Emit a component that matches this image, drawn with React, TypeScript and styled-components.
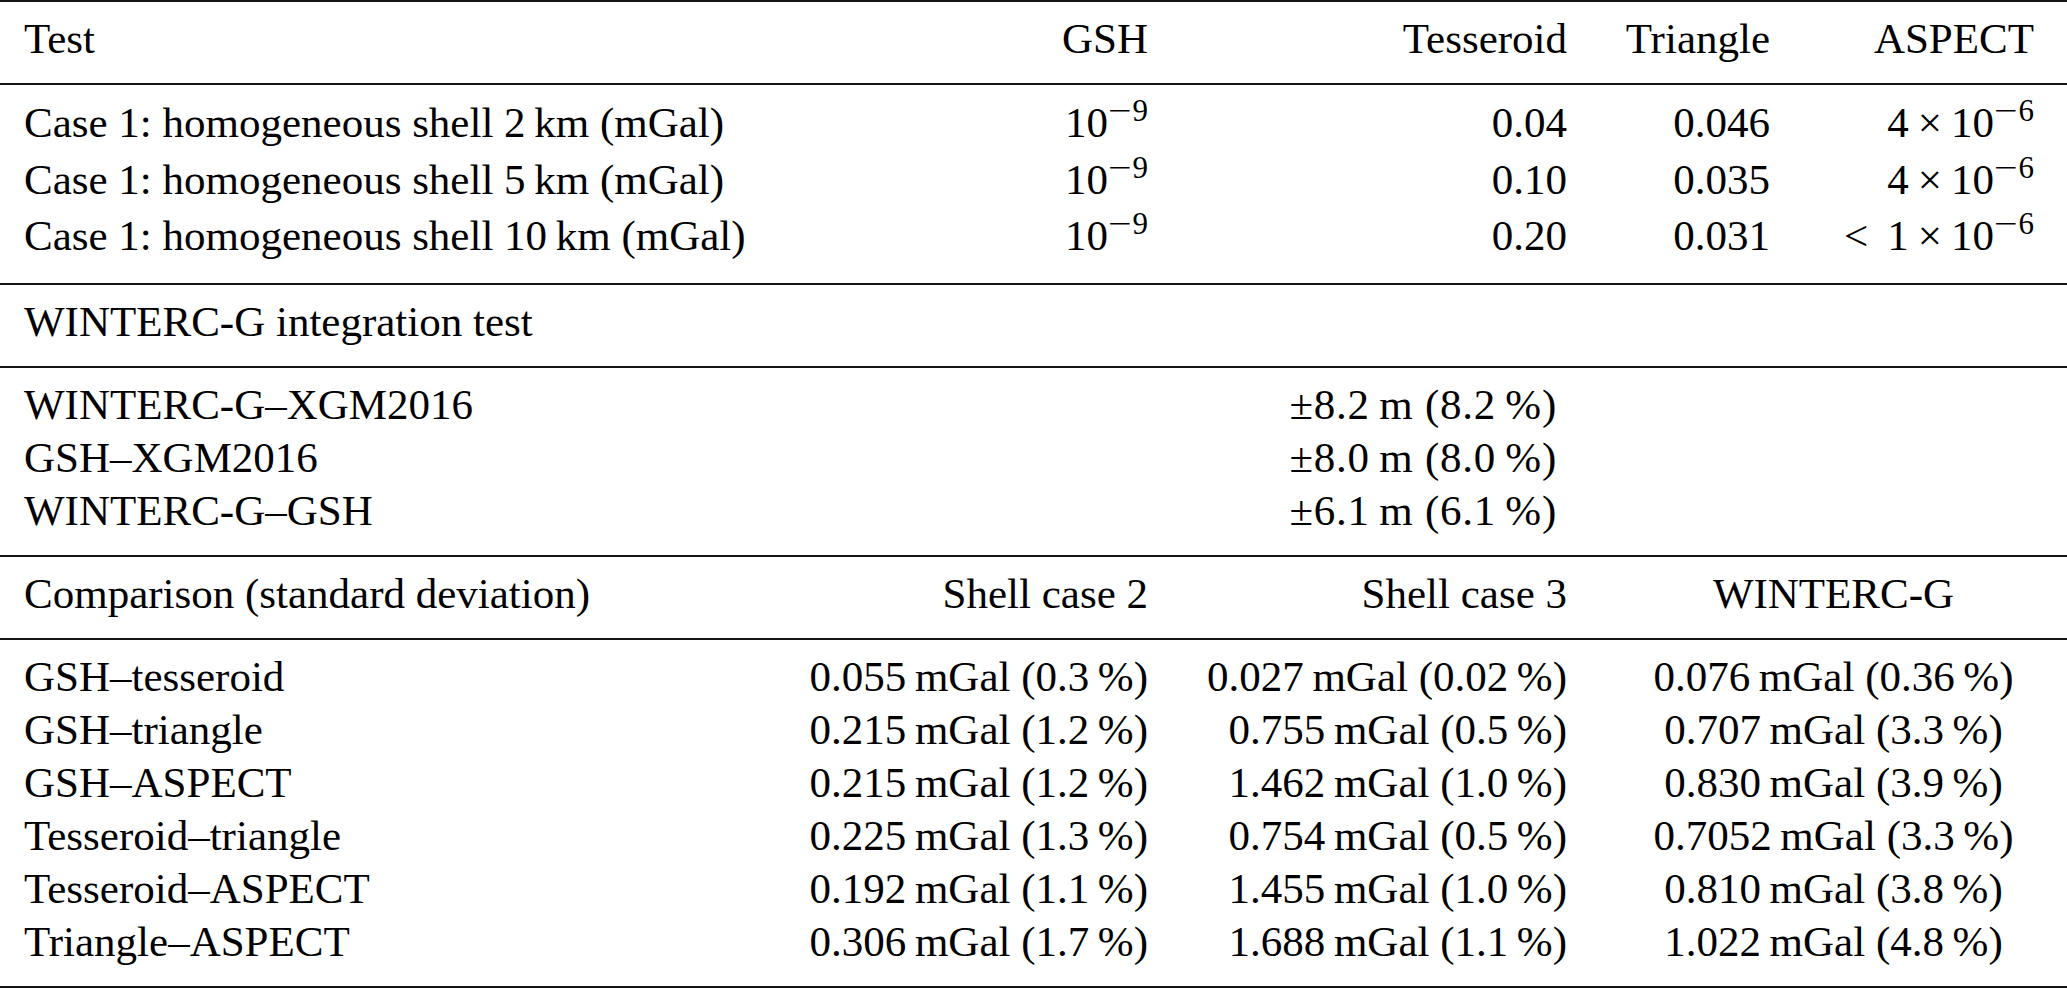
import React from "react";
import styled, { createGlobalStyle } from "styled-components";

const GlobalStyle = createGlobalStyle`
  html, body {
    margin: 0;
    padding: 0;
    background: #ffffff;
  }
  body {
    font-family: "Liberation Serif", "Times New Roman", serif;
    color: #000;
  }
`;

const COLUMNS = "780px 392px 419px 203px 273px";

const Table = styled.div`
  width: 2067px;
  display: flex;
  flex-direction: column;
  font-family: "Liberation Serif", "Times New Roman", serif;
  font-size: 43px;
  color: #000;
`;

const Rule = styled.div`
  height: 2px;
  background: #161616;
`;

const Section = styled.div<{ $lh: number }>`
  display: grid;
  grid-template-columns: ${COLUMNS};
  grid-auto-rows: ${(p) => p.$lh}px;
  line-height: ${(p) => p.$lh}px;
  padding: 10px 0 18px;
`;

type Align = "left" | "right" | "center";

const Cell = styled.div<{
  $align?: Align;
  $span?: number;
  $padL?: number;
  $padR?: number;
  $tracking?: number;
}>`
  grid-column: span ${(p) => p.$span ?? 1};
  text-align: ${(p) => p.$align ?? "right"};
  padding-left: ${(p) => p.$padL ?? 24}px;
  padding-right: ${(p) => p.$padR ?? 24}px;
  letter-spacing: ${(p) => p.$tracking ?? 0}px;
  white-space: nowrap;
`;

const Sup = styled.span`
  font-size: 31px;
  position: relative;
  top: -16px;
  line-height: 0;
`;

const MathMinus = styled.span`
  display: inline-block;
  transform: scaleX(1.35);
  margin: 0 4px 0 3px;
`;

const MathOp = styled.span<{ $l: number; $r: number }>`
  display: inline-block;
  margin-left: ${(p) => p.$l}px;
  margin-right: ${(p) => p.$r}px;
`;

const thin = "\u2009";

const Pow = ({ exp }: { exp: string }) => (
  <>
    10
    <Sup>
      <MathMinus>−</MathMinus>
      {exp}
    </Sup>
  </>
);

const Times = () => (
  <MathOp $l={9} $r={9}>
    ×
  </MathOp>
);

const caseRows = [
  {
    label: `Case 1: homogeneous shell 2${thin}km (mGal)`,
    tess: "0.04",
    tri: "0.046",
    asp: (
      <>
        4<Times />
        <Pow exp="6" />
      </>
    ),
  },
  {
    label: `Case 1: homogeneous shell 5${thin}km (mGal)`,
    tess: "0.10",
    tri: "0.035",
    asp: (
      <>
        4<Times />
        <Pow exp="6" />
      </>
    ),
  },
  {
    label: `Case 1: homogeneous shell 10${thin}km (mGal)`,
    tess: "0.20",
    tri: "0.031",
    asp: (
      <>
        <MathOp $l={0} $r={19}>
          &lt;
        </MathOp>
        1<Times />
        <Pow exp="6" />
      </>
    ),
  },
];

const integrationRows = [
  { label: "WINTERC-G–XGM2016", value: `±8.2${thin}m (8.2${thin}%)` },
  { label: "GSH–XGM2016", value: `±8.0${thin}m (8.0${thin}%)` },
  { label: "WINTERC-G–GSH", value: `±6.1${thin}m (6.1${thin}%)` },
];

const comparisonRows = [
  ["GSH–tesseroid", "0.055 mGal (0.3 %)", "0.027 mGal (0.02 %)", "0.076 mGal (0.36 %)"],
  ["GSH–triangle", "0.215 mGal (1.2 %)", "0.755 mGal (0.5 %)", "0.707 mGal (3.3 %)"],
  ["GSH–ASPECT", "0.215 mGal (1.2 %)", "1.462 mGal (1.0 %)", "0.830 mGal (3.9 %)"],
  ["Tesseroid–triangle", "0.225 mGal (1.3 %)", "0.754 mGal (0.5 %)", "0.7052 mGal (3.3 %)"],
  ["Tesseroid–ASPECT", "0.192 mGal (1.1 %)", "1.455 mGal (1.0 %)", "0.810 mGal (3.8 %)"],
  ["Triangle–ASPECT", "0.306 mGal (1.7 %)", "1.688 mGal (1.1 %)", "1.022 mGal (4.8 %)"],
];

const fmt = (s: string) => s.replace(/ mGal/, `${thin}mGal`).replace(/ %/, `${thin}%`);

export default function App() {
  return (
    <>
      <GlobalStyle />
      <Table>
        <Rule />
        <Section $lh={53}>
          <Cell $align="left" $padR={0}>
            Test
          </Cell>
          <Cell>GSH</Cell>
          <Cell>Tesseroid</Cell>
          <Cell>Triangle</Cell>
          <Cell $padR={33}>ASPECT</Cell>
        </Section>
        <Rule />
        <Section $lh={56.5}>
          {caseRows.map((r) => (
            <React.Fragment key={r.label}>
              <Cell $align="left" $padR={0}>
                {r.label}
              </Cell>
              <Cell>
                <Pow exp="9" />
              </Cell>
              <Cell>{r.tess}</Cell>
              <Cell>{r.tri}</Cell>
              <Cell $padR={33}>{r.asp}</Cell>
            </React.Fragment>
          ))}
        </Section>
        <Rule />
        <Section $lh={53}>
          <Cell $align="left" $span={5}>
            WINTERC-G integration test
          </Cell>
        </Section>
        <Rule />
        <Section $lh={53}>
          {integrationRows.map((r) => (
            <React.Fragment key={r.label}>
              <Cell $align="left" $padR={0}>
                {r.label}
              </Cell>
              <Cell $span={2} $padR={34} $tracking={0.75}>
                {r.value}
              </Cell>
              <Cell $span={2} />
            </React.Fragment>
          ))}
        </Section>
        <Rule />
        <Section $lh={53}>
          <Cell $align="left" $padR={0}>
            Comparison (standard deviation)
          </Cell>
          <Cell>Shell case 2</Cell>
          <Cell>Shell case 3</Cell>
          <Cell $span={2} $align="center" $padL={30} $padR={21}>
            WINTERC-G
          </Cell>
        </Section>
        <Rule />
        <Section $lh={53}>
          {comparisonRows.map((r) => (
            <React.Fragment key={r[0]}>
              <Cell $align="left" $padR={0}>
                {r[0]}
              </Cell>
              <Cell>{fmt(r[1])}</Cell>
              <Cell>{fmt(r[2])}</Cell>
              <Cell $span={2} $align="center" $padL={30} $padR={21}>
                {fmt(r[3])}
              </Cell>
            </React.Fragment>
          ))}
        </Section>
        <Rule />
      </Table>
    </>
  );
}
